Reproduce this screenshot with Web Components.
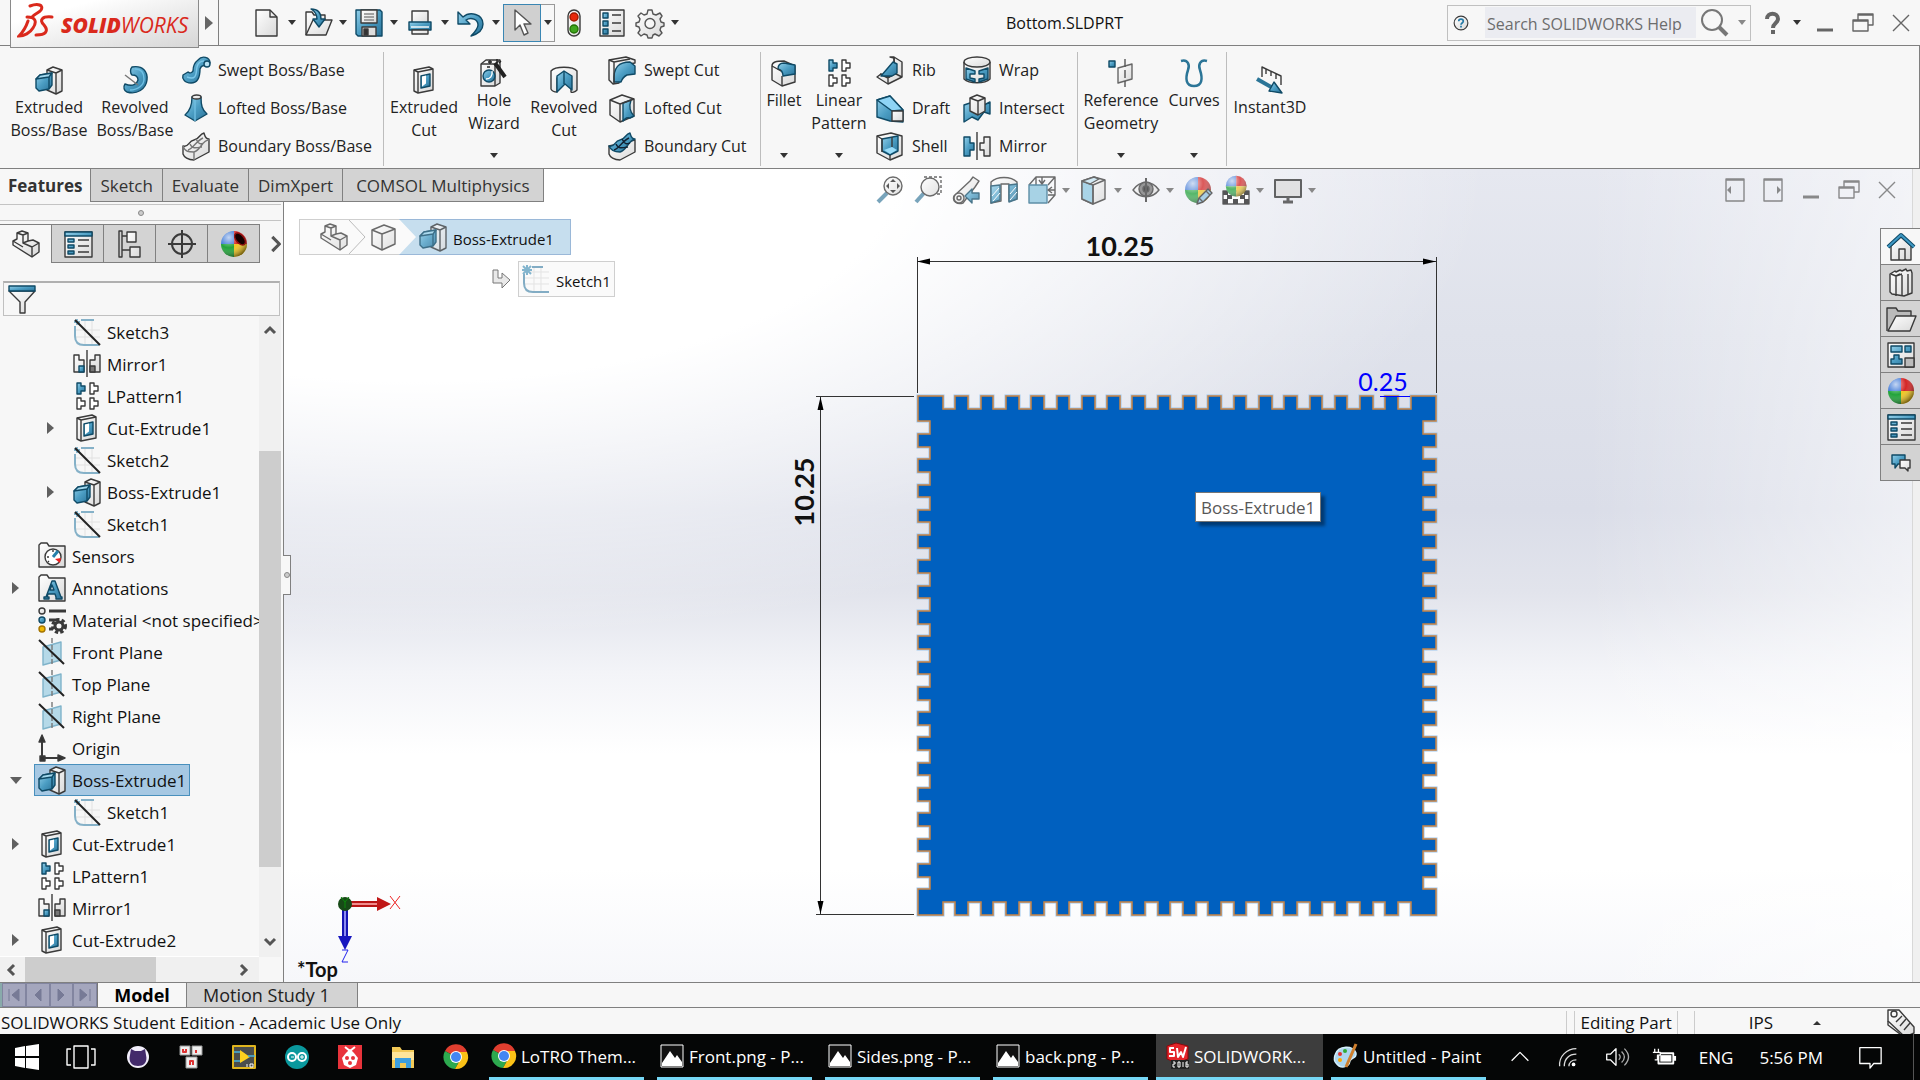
<!DOCTYPE html>
<html lang="en">
<head>
<meta charset="utf-8">
<title>Bottom.SLDPRT</title>
<style>
  html, body { margin: 0; height: 100%; overflow: hidden; }
  body { font: 17px/23px "Open Sans", "Noto Sans", sans-serif; color: #1a1a1a; background: #f7f7f7; }
</style>
</head>
<body>
<sw-app></sw-app>
<script>
const ICONS = {
  newdoc: '<path class="g" d="M3 1h14l7 7v19H3z"/><path d="M17 1v7h7"/>',
  open: '<path class="g" d="M2 26V3h6l2 3h11v5"/><path class="g" d="M2 26l7-15h19l-6 15z"/><path class="b" d="M7 0c7 0 10 4 10 10h4l-6 8-6-8h4c0-4-1-7-6-10z"/>',
  save: '<path class="b" d="M1 1h24l2 2v24H3l-2-2z"/><path class="g" d="M6 1h16v13H6z"/><path d="M9 5h10M9 8h10M9 11h10" stroke="#888"/><path d="M7 18h14v9H7z" fill="#ddd"/><path d="M9 20h4v6H9z" fill="#333"/>',
  print: '<path class="g" d="M6 2h16v13H6z"/><path class="b" d="M3 13h22v8H3z"/><path d="M5 18h18" stroke="#fff"/><path class="g" d="M6 21h16v4H6z"/>',
  undo: '<path class="b" d="M1 3v12h12l-4-4c5-3 12-1 12 5 0 4-3 7-7 11 7-2 12-6 12-12C26 5 13 2 6 8z"/>',
  select: '<path d="M7 1v20l5-5 4 10 4-2-4-9h7z" fill="#fff" stroke="#555"/>',
  traffic: '<rect class="g" x="8" y="1" width="12" height="26" rx="6"/><circle cx="14" cy="8" r="4" fill="#e8290b" stroke="#a31a00"/><circle cx="14" cy="20" r="4" fill="#3fa51d" stroke="#247306"/>',
  list: '<path class="g" d="M2 1h24v26H2z"/><path class="b" d="M5 4h5v5H5zM5 12h5v5H5zM5 20h5v5H5z"/><path d="M14 6h9M14 14h9M14 22h9"/>',
  gear: '<path class="g" stroke="#555" d="M12 1h4l1 4 3 1 4-2 2 3-2 3 1 3 3 1v3l-3 1-1 3 2 3-3 3-4-2-2 1-1 3h-4l-1-3-3-1-3 2-3-3 2-3-1-3-3-1v-3l3-1 1-3-2-3 3-3 3 2 3-1z"/><circle cx="14" cy="14.500" r="5" fill="#f7f7f7" stroke="#555"/>',
  boss: '<path class="g" d="M12 4l6-3 9 3v21l-6 3-9-4z"/><path d="M12 4l9 3v21M21 7l6-3"/><path class="b" d="M1 13l4-4 12-2v12l-3 4-10 2-3-3z"/><path fill="#a3d9ef" stroke="#0f4a66" d="M1 13l4-4 12-2-3 4z"/><path class="l" d="M14 11v12"/>',
  revolve: '<path class="b" d="M11 1c11-2 16 5 15 13-1 9-10 15-20 12-3-1-4-5-2-8 8 3 12 0 13-4 0-4-2-5-6-5-2-2-2-6 0-8z"/><path d="M14 3c6 0 9 4 9 10s-6 11-14 11" stroke="#6fc0e4"/><path d="M4 9l13 10" stroke="#777"/>',
  swept: '<path class="b" d="M16 4c4-5 12-3 12 3l-4 3c-3-1-5 0-6 3 0 10-3 14-9 14-7 0-9-5-8-8l5-3c2 1 3 2 5-1 0-5 1-8 5-11z"/><path d="M5 21c10 4 9-4 10-10 1-4 3-6 7-6" stroke="#7cc8ea"/><circle cx="25" cy="8" r="3" fill="#b8e2f4" stroke="#0f4a66"/>',
  loft: '<path class="b" d="M10 3c0 9-2 14-7 18l10 6 12-7c-5-4-6-9-6-17z"/><ellipse class="g" cx="14.500" cy="3" rx="4.500" ry="2"/><path d="M13 27V6" stroke="#70bfe2"/>',
  boundary: '<path class="g" d="M1 14c6 2 5-5 11-6s5-6 10-7c1 3 1 6 5 6v13l-15 8c-6 0-10-3-11-6z"/><path d="M1 14c2 6 6 6 11 6 7-2 8-12 15-12M12 20v8M8 12c2 5 6 4 12 3M14 7c3 6 5 5 8 4M6 18c5-1 8-9 15-12" stroke="#777"/>',
  boundarycut: '<path class="g" d="M1 14v8c1 3 5 6 11 6l15-8V8z"/><path class="b" d="M1 14c6 2 5-5 11-6s5-6 10-7c1 3 1 6 5 6-7 2-8 11-15 13-5 0-9-1-11-6z"/><path d="M8 12c2 5 6 4 12 3M14 7c3 6 5 5 8 4M6 18c5-1 8-9 15-12" stroke="#123"/>',
  cut: '<path class="g" d="M4 4l15-3 4 2v21L8 27l-4-2z"/><path d="M4 4l4 2 15-3M8 6v21"/><path class="b" d="M11 10l9-2v12l-9 2z"/><path d="M12 10.500l4-1v8l-4 3z" fill="#fff" stroke="none"/>',
  hole: '<path class="g" d="M1 5l5-4h14v23l-5 3H1z"/><path d="M1 5h14v22M15 5l5-4"/><circle class="b" cx="9" cy="17" r="6"/><path d="M6 20c4 0 7-3 6-8" stroke="#fff"/><path d="M15 4l10 14" stroke="#222" stroke-width="4"/><path d="M8 3h4M10 1v4M17 0v4M21 2l-2 2M7 8h3" stroke="#222"/>',
  revcut: '<path class="g" d="M1 5c4-5 22-5 26 0v19c-2 2-5 3-6 2V12l-7-6-7 6v14c-3 0-5-1-6-3z"/><path class="b" d="M7 10l7-5 8 5v14l-7-6-8 8z"/><path class="l" d="M14 5v13"/>',
  sweptcut: '<path class="g" d="M1 4l17-3 9 3v3l-7 1c-8 4-8 10-9 19l-6 1-4-4z"/><path class="b" d="M6 26c-1-15 5-20 16-20l5 4v8l-8 1c-4 2-5 4-6 7z"/><path d="M1 4l5 2v22M6 6l16-3"/>',
  loftcut: '<path class="g" d="M2 6l12-5 12 4v17l-14 6L2 21z"/><path d="M2 6l10 4v18"/><path class="b" d="M15 9l8-3c-2 6-2 11 3 16l-4 2c-3-1-4 0-7 3z"/><path d="M12 10l14-5"/>',
  fillet: '<path class="g" d="M2 7c0-4 4-5 12-5l11 5v16L12 27 2 21z"/><path class="b" d="M8 10c0-5 3-6 6-6l11 2v9l-12 2c0-4-1-6-5-7z"/><path d="M12 17v10M2 7l9 5"/>',
  pattern: '<path class="b" d="M4 1h4v3h4v5H8v3H4z"/><path d="M17 1h4v3h4v5h-4v3h-4zM4 16h4v3h4v5H8v3H4zM17 16h4v3h4v5h-4v3h-4z" fill="#fff"/>',
  rib: '<path class="g" d="M14 1h4l8 5v15l-14 7-11-7 4-3 8 3 6-3-1-16z"/><path d="M18 2v16l-6 4-8-4M12 22v6M18 17l8 4"/><path class="b" d="M17 6l4 2v9l-5 3H5z"/>',
  draft: '<path class="b" d="M1 6l13-4 13 14v12l-13-1L1 23z"/><path fill="#8ed4f5" stroke="#0f4a66" d="M1 6l13-4 13 14-11 1z"/><path class="g" d="M16 17h11v10H16z"/>',
  shell: '<path class="g" d="M1 4l14-3 11 3v19l-12 5L1 21z"/><path class="b" d="M6 7l16-3v15l-8 4-8-4z"/><path fill="#9adcf8" stroke="none" d="M8 18l8-3 5 3-7 4z"/><path d="M1 4l5 3v13M14 28v-5M16 5v10"/>',
  wrap: '<path class="g" d="M1 6v17c5 5 21 5 26 0V6"/><ellipse class="g" cx="14" cy="6" rx="13" ry="5"/><path class="b" d="M3 12l9 3v3H7v4l5 1v3l-9-3zM25 12l-9 3v3h5v4l-5 1v3l9-3z"/>',
  intersect: '<path class="b" d="M1 11l9-3 7 5 10-5v12l-6-2-6 8-6-3-8 5z"/><path class="g" d="M7 4l7-3 8 3v13l-7 4-8-4z"/><path d="M7 4l8 3v14M15 7l7-3"/>',
  mirror: '<path class="b" d="M1 5h6v6h4v7H7v6H1z"/><path class="g" d="M27 5h-6v6h-4v7h4v6h6z"/><path d="M14 0v28"/>',
  refgeo: '<path class="b" d="M2 2h6v6H2z"/><path class="g" stroke="#666" d="M11 9l14-4v15l-14 4z"/><path d="M18 0v28" stroke-dasharray="8 3" stroke="#555"/>',
  curves: '<path d="M1 2c7-2 9 4 7 9-3 9-2 16 6 16s9-7 6-16c-2-5 0-11 7-9" stroke="#2b7597" stroke-width="2.500"/>',
  instant: '<path d="M6 11V1l19 9v9M10 3v5M15 5v5M20 8v5"/><path d="M1 13l16 9" stroke="#2b7597" stroke-width="4"/><path class="b" d="M18 16l8 11-13-2z"/>',
  zoomfit: '<path d="M2 26l9-9" stroke="#4c86a5" stroke-width="4"/><circle class="g" cx="17" cy="10" r="9"/><path fill="#222" stroke="none" d="M17 3l3 3h-6zM17 17l3-3h-6zM10 10l3-3v6zM24 10l-3-3v6z"/>',
  zoomarea: '<path d="M2 26l8-9" stroke="#4c86a5" stroke-width="4"/><path d="M10 1h17v17h-5" stroke-dasharray="3 2"/><circle class="g" cx="16" cy="11" r="9"/>',
  prev: '<path class="g" d="M2 20L18 5l3-4 6 4-4 6-12 16c-6 2-11-2-9-7z"/><circle class="g" cx="7" cy="22" r="5"/><circle cx="7" cy="22" r="2"/><path class="b" d="M13 20l7-7v4h7v6h-7v4z"/>',
  section: '<path class="g" d="M1 6c6-6 20-6 26 0v17l-8 2V8h-8v17l-10 2z"/><path class="b" d="M1 10l9-1v15l-9 3zM19 9l8-1v15l-8 3z"/><path d="M2 20l7-8M3 25l7-8M20 18l6-7M20 24l7-8" stroke="#fff" stroke-width="1"/>',
  orient: '<path d="M1 9l7-8h19v18l-7 8M8 1v8M20 9l7-8M27 19h-7"/><path fill="#8cc5de" stroke="#2b6c8c" d="M1 9h18v18H1z"/><path d="M14 1v6M11 4l3 4 3-4M27 14h-6M24 11l-4 3 4 3"/>',
  display: '<path class="g" d="M2 5l12-4 11 3v19l-12 5-11-5z"/><path fill="#8fc9e2" d="M2 5l11 4v19L2 23z"/><path fill="#c6e5f2" d="M2 5l12-4 5 2-9 5z"/><path d="M13 9l12-5M13 9v19"/>',
  eye: '<path class="g" d="M1 14c7-10 19-10 26 0-7 9-19 9-26 0z"/><circle cx="14" cy="13" r="7" fill="#777"/><circle cx="14" cy="13" r="3" fill="#222"/><path d="M14 2v24" stroke-width="2"/>',
  monitor: '<path d="M1 4h26v17H1z" fill="#ddd" stroke="#333" stroke-width="2"/><path d="M14 21v5M9 26h10" stroke-width="3"/>',
  part: '<path class="g" d="M1 11l4-2V3l5-2 6 2v8l5-1 6 3v9l-7 5L1 15z"/><path d="M5 3l6 2 5-2M11 5v8l9 4v10M20 17l7-4M11 13l5-2M1 11l10 6"/>',
  cube: '<path class="g" d="M2 7l12-5 11 4v15l-13 6-10-5z"/><path d="M2 7l10 4v16M12 11l13-5"/>',
  props: '<path class="g" d="M1 2h27v25H1z"/><path class="b" d="M1 2h27v4H1zM4 9h6v3H4zM4 15h6v3H4zM4 21h6v3H4z"/><path d="M14 10h11M14 16h11M14 22h11"/>',
  config: '<path d="M3 1h3v26H3zM6 6h5M6 20h8"/><path class="g" d="M11 2h9v10h-9zM14 17h10v10H14z"/>',
  target: '<circle cx="14" cy="14" r="10" stroke-width="2"/><path d="M0 14h28M14 0v28" stroke-width="2"/>',
  filter: '<path class="g" d="M1 6h26L17 17v11h-5V17z"/><path class="b" d="M1 1h26v5H1z"/>',
  sketch: '<path d="M1 12h26M1 19h26M12 1v26M19 1v26" stroke="#e1e1e1" stroke-width="1"/><path d="M8 2h13M2 8v10c0 6 3 9 9 9h15" stroke="#85b1c8" stroke-width="2"/><path d="M1 4h6M4 1v6M2 2l5 5" stroke="#5a9dbf"/><path d="M2 2l25 25" stroke="#222" stroke-width="2"/>',
  sketchplain: '<path d="M1 7h26M1 13h26M1 19h26M12 1v26M19 1v26" stroke="#ddd" stroke-width="1"/><path d="M10 2h11M2 9v9c0 6 3 9 9 9h16" stroke="#5a93b2" stroke-width="2"/><path d="M0 5h10M5 0v10M1 1l8 8M1 9l8-8" stroke="#5a9dbf" stroke-width="2"/>',
  mirrorf: '<path class="g" d="M1 5h5v5h5v12H1zM27 5h-5v5h-5v12h10z"/><path class="b" d="M6 16h5v6H6z"/><path d="M17 16h5v6h-5z" fill="#777"/><path d="M14 0v27"/>',
  sensor: '<path class="g" d="M1 25V3l2-2h6l2 3h16v21z"/><circle cx="15" cy="15" r="8" fill="#fff"/><path d="M15 15l5-6" stroke="#2680ab" stroke-width="3"/><path fill="#e22" stroke="none" d="M17 17l6-1-1 5z"/><path d="M9 15h2M15 8v2M10 20l1-1"/>',
  note: '<path class="g" d="M1 27V3l2-2h6l2 3h16v23z"/><path class="b" d="M6 25v-2h2l6-16h3l6 16h1v2h-6v-2l-1-3h-7l-1 3h2v2zM12 16h4l-2-5z"/>',
  material: '<g stroke-width="3"><path d="M11 5h17M11 14h10M11 23h4"/></g><circle class="g" cx="4" cy="5" r="3"/><circle class="b" cx="4" cy="14" r="3"/><circle cx="4" cy="23" r="3" fill="#f0b800" stroke="#a67500"/><circle cx="21" cy="20" r="6" stroke-width="4" stroke-dasharray="3 2"/><circle cx="21" cy="20" r="4" stroke-width="3"/>',
  plane: '<path d="M5 9l18-5v18L5 27z" fill="#b5d9e8" stroke="#7fb3ca"/><path d="M14 0v28" stroke="#777" stroke-dasharray="5 2"/><path d="M1 2l25 24" stroke="#222" stroke-width="2"/>',
  origin: '<path d="M4 6v18h18" stroke-width="2"/><path fill="#333" d="M1 8l3-7 3 7zM20 21l7 3-7 3zM2 22h5v5H2z"/>',
  home: '<path class="g" d="M4 13L14 4l10 9v14H4z"/><path d="M12 27V16h6v11"/><path d="M1 14L14 2l13 12" stroke="#0f4a66" stroke-width="4"/><path d="M1 14L14 2l13 12" stroke="#3e98c4" stroke-width="2"/>',
  books: '<path class="g" d="M3 5l5-3 1 1 4-2 2 1 4-2 1 2 4-1 1 3v20l-8 3-12-2-2-2z"/><path d="M9 7v20M15 6v21M21 5v20M4 5l5 2 4-2M9 7l6-2"/>',
  folder: '<path d="M0 26V3h9l2 3h13v5" fill="#bbb"/><path class="g" d="M1 26L9 11h20l-6 15z"/>',
  palette: '<path class="g" d="M1 2h26v24H1z"/><path class="b" d="M4 5h11v6H4zM18 5h6v6h-6zM4 23v-5h3v-4h5v4h3v5z"/><path fill="#bbb" d="M18 17h9v9h-9z"/>',
  chat: '<path class="b" d="M5 6h13v9h-7l-3 4v-4H5z"/><path class="g" d="M13 11h10v8h-2v3l-3-3h-5z"/>',
  helpball: '<circle class="g" cx="14" cy="14" r="12" stroke-width="2"/><path d="M10 11c0-5 8-5 8 0 0 3-4 3-4 6M14 19v3" stroke="#2579a5" stroke-width="3"/>',
  magnify: '<circle cx="11" cy="11" r="10" stroke="#777" stroke-width="2"/><path d="M18 18l8 8" stroke="#777" stroke-width="4"/>',
  help: '<path d="M9 10c0-7 11-7 11 0 0 4-5 4-5 9M15 21v4" stroke="#666" stroke-width="4"/>',
  min: '<path d="M6 21h16" stroke="#666" stroke-width="3"/>',
  restore: '<path d="M9 11V5h15v11h-5M4 11h15v11H4zM9 6h15M4 12h15" stroke="#666"/>',
  close: '<path d="M6 6l16 16M22 6L6 22" stroke="#666"/>',
  dockl: '<path d="M5 3h18v22H5zM5 4h18" stroke="#666"/><path fill="#666" stroke="none" d="M6 14l4-4v8z"/>',
  dockr: '<path d="M5 3h18v22H5zM5 4h18" stroke="#666"/><path fill="#666" stroke="none" d="M22 14l-4-4v8z"/>',
  tag: '<path class="g" d="M1 1h11l15 17v6l-9 4L1 12z"/><circle cx="7" cy="5" r="3"/><path d="M9 13l6-6M13 17l6-7M17 21l6-7M1 12v4l16 12"/>',
  win: '<path fill="#fff" stroke="none" d="M2 5l10-2v10H2zM13 3l13-2v12H13zM2 15h10v10L2 23zM13 15h13v12l-13-2z"/>',
  taskview: '<path d="M7 3h14v22H7zM4 6H0v16h4M24 6h4v16h-4" stroke="#fff"/>',
  github: '<circle cx="14" cy="14" r="11" fill="#f2eefa" stroke="none"/><path fill="#432a6b" stroke="none" d="M7 6l4 2h6l4-2 1 6c2 8-3 11-8 11S4 20 6 12z"/>',
  cards: '<g fill="#eee" stroke="#999" stroke-width="1"><path d="M3 3h10v9H3zM15 3h10v9H15zM9 14h11v11H9z"/></g><path d="M6 6v3h3V6M19 7v3M13 22v-4h3v4" stroke="#d33" stroke-width="2"/>',
  labview: '<path fill="#4a4d4c" stroke="#e0b51e" stroke-width="2" d="M3 3h22v22H3z"/><path fill="#ffd21e" stroke="none" d="M10 7l10 7-10 6z"/><path d="M4 9h6M4 18h6M18 13h7" stroke="#48b4dd"/><path d="M17 21v3M20 21v3h3v-3z" stroke="#fff" stroke-width="1"/>',
  arduino: '<circle cx="14" cy="14" r="12" fill="#0a989d" stroke="none"/><g stroke="#fff" stroke-width="2"><circle cx="9" cy="14" r="4"/><circle cx="19" cy="14" r="4"/><path d="M8 14h3M17 14h4M19 12v4" stroke-width="1"/></g>',
  berry: '<path fill="#e8333b" stroke="none" d="M2 2h24v24H2z"/><path fill="#fff" stroke="none" d="M14 6l4 4 4 5-2 7-6 3-6-3-2-7 4-5z"/><path d="M9 4l5 4 5-4" stroke="#fff" stroke-width="2"/><g fill="#e8333b" stroke="none"><circle cx="11" cy="15" r="2"/><circle cx="17" cy="15" r="2"/><circle cx="14" cy="20" r="2"/></g>',
  explorer: '<path fill="#f3c956" stroke="none" d="M3 4h8l2 3h12v18H3z"/><path fill="#ffe59a" stroke="none" d="M3 9h22v8H3z"/><path fill="#3d9fe0" stroke="none" d="M6 25V15h16v10h-5v-5h-6v5z"/>',
  chrome: '<g stroke="none"><path fill="#e03e2f" d="M14 14L3 8A12 12 0 0 1 25 9H14z"/><path fill="#2da94f" d="M14 14L3 8a12 12 0 0 0 10 18l5-9z"/><path fill="#fbc116" d="M14 9h11a12 12 0 0 1-12 17l5-9z"/><circle cx="14" cy="14" r="6" fill="#fff"/><circle cx="14" cy="14" r="5" fill="#4286f3"/></g>',
  photo: '<path fill="#111" stroke="#fff" stroke-width="1" d="M3 3h22v22H3z"/><path fill="#fff" stroke="none" d="M4 21l8-12 5 7 2-3 5 7v4H4z"/>',
  sw: '<path fill="#e4252a" stroke="#89090c" stroke-width="1" d="M4 4l9-3 12 3v13l-11 4-10-4z"/><path d="M11 6H7v4h4v4H6M14 6l1 9 3-5 2 5 3-10" stroke="#fff" stroke-width="2"/><path fill="#222" stroke="none" d="M8 18h18v9H8z"/><path d="M10 20h2v2h-2v3h2M15 20h2v5h-2zM20 20v5M25 20h-2v5h2v-3h-2" stroke="#fff" stroke-width="1"/>',
  paint: '<path fill="#acd5ee" stroke="#d5effb" d="M3 13C6 3 22 3 24 11c1 6-5 4-6 8-1 7-10 8-14 2-2-2-2-5-1-8z"/><path d="M24 2L14 25" stroke="#cf7f2e" stroke-width="3"/><g stroke="none"><circle cx="8" cy="12" r="2" fill="#d33"/><circle cx="13" cy="9" r="2" fill="#3a3"/><circle cx="8" cy="18" r="2" fill="#fa0"/></g>',
  up: '<path d="M5 18l9-9 9 9" stroke="#fff"/>',
  wifi: '<g stroke="#ddd"><path d="M5 24C4 13 13 5 23 5M10 24c0-8 5-13 13-13M15 24c0-4 3-7 8-7"/></g><circle cx="20" cy="22" r="2" fill="#fff" stroke="none"/>',
  sound: '<g stroke="#fff"><path d="M4 11h4l6-6v18l-6-6H4z"/><path d="M17 11c2 2 2 4 0 6M20 8c4 4 4 8 0 12M23 5c6 6 6 12 0 18" stroke="#aaa"/></g>',
  battery: '<path d="M8 10h16v11H8zM26 13v5" stroke="#fff" stroke-width="2"/><path d="M10 12h12v7H10z" fill="#fff" stroke="none"/><path d="M4 5v4M8 5v4M2 9h8v3H7v5H4" stroke="#fff" fill="#111"/>',
  action: '<path d="M3 4h23v17h-8l-4 5v-5H3z" stroke="#fff"/>',
  chevr: '<path d="M8 5l9 9-9 9" stroke="#555" stroke-width="4"/>'
};
const BALL = '<g stroke="none"><path fill="#3975d6" d="M14 14H1A13 13 0 0 1 14 1z"/><path fill="#d42525" d="M14 14V1a13 13 0 0 1 13 13z"/><path fill="#22a33a" d="M14 14v13A13 13 0 0 1 1 14z"/><path fill="#f0c522" d="M14 14h13a13 13 0 0 1-13 13z"/><circle cx="14" cy="14" r="13" fill="url(#s)"/></g>';
ICONS.ball = BALL;
ICONS.display2 = BALL + '<ellipse cx="20" cy="9" rx="4" ry="7" transform="rotate(-40 20 9)" fill="#150000" stroke="#8b1010"/>';
ICONS.appearance = BALL + '<path d="M13 28l2-6 9-9 4 4-9 9z" fill="#8fc3de" stroke="#333"/><path d="M15 22l4 4M22 15l4 4"/>';
ICONS.scene = '<path fill="#fff" stroke="#333" d="M1 15h26v13H1z"/><path fill="#222" stroke="none" d="M1 15h5v4H1zM22 15h5v4h-5zM5 19h5v4H5zM18 19h5v4h-5zM1 23h5v5H1zM11 23h5v5h-5zM22 23h5v5h-5z"/><g transform="translate(3 -1) scale(.8)">' + BALL + '</g>';
const DEFS = '<defs><linearGradient id="b" x1="0" y1="0" x2="1" y2="1"><stop offset="0" stop-color="#94d0ea"/><stop offset=".5" stop-color="#4b9dc3"/><stop offset="1" stop-color="#2a7197"/></linearGradient><linearGradient id="g" x1="0" y1="0" x2="1" y2="1"><stop offset="0" stop-color="#fff"/><stop offset="1" stop-color="#d9d9d9"/></linearGradient><radialGradient id="s" cx=".3" cy=".25" r=".8"><stop offset="0" stop-color="#fff" stop-opacity=".7"/><stop offset=".5" stop-color="#fff" stop-opacity="0"/><stop offset="1" stop-color="#000" stop-opacity=".5"/></radialGradient></defs>';

function define(name, markup, setup) {
  const template = document.createElement('template');
  customElements.define(name, class extends HTMLElement {
    constructor() { super(); this.attachShadow({ mode: 'open' }); }
    connectedCallback() {
      if (this.shadowRoot.childNodes.length) return;
      template.innerHTML = typeof markup === 'function' ? markup(this) : markup;
      this.shadowRoot.append(template.content.cloneNode(true));
      if (setup) setup(this, this.shadowRoot);
    }
  });
}
const BUTTON = 'button{font:inherit;color:inherit;background:none;border:0;padding:0;margin:0}';

define('sw-icon', el => `<style>:host{display:block;flex:none;width:var(--size,28px);height:var(--size,28px)}
svg{display:block;width:100%;height:100%;overflow:visible;fill:none;stroke:#3a3a3a;stroke-width:1.4;stroke-linejoin:round}
.b{fill:url(#b);stroke:#0f4a66}.g{fill:url(#g)}.l{stroke:#0f4a66}</style>
<svg viewBox="0 0 28 28" aria-hidden="true">${DEFS}${ICONS[el.getAttribute('name')] || ''}</svg>`);

define('sw-caret', '<style>:host{display:block;flex:none;width:0;height:0;border:4px solid transparent;border-top:5px solid #333;border-bottom:0}:host([dim]){border-top-color:#888}</style>');

/* Icon button for the title bar and the view toolbar, with an optional menu arrow. */
define('sw-tool', el => `<style>:host{display:block;flex:none}${BUTTON}button{display:flex;align-items:center;gap:7px}
:host([dim]) button{gap:6px}:host([dim]) sw-icon{opacity:.75}
:host([active]) button{gap:0}:host([active]) sw-icon{padding:4px;background:#d0d0d0;border:1px solid #3a86b3}
:host([active]) .c{display:flex;align-items:center;justify-content:center;width:13px;height:36px;border:1px solid #999;border-left:0}</style>
<button aria-label="${el.getAttribute('icon')}"><sw-icon name="${el.getAttribute('icon')}"></sw-icon>${el.hasAttribute('drop') ? `<span class="c"><sw-caret ${el.hasAttribute('dim') ? 'dim' : ''}></sw-caret></span>` : ''}</button>`);

define('sw-logo', `<style>:host{display:flex;align-items:center;box-sizing:border-box;width:189px;height:50px;gap:6px;padding:6px 0 0 6px;border:1px solid #8a8a8a;border-top:0;background:linear-gradient(165deg,#fff 25%,#d6d6d6);color:#da291c;font:italic 21px/26px "Open Sans",sans-serif;position:relative;z-index:2}
svg{flex:none;width:38px;height:36px;margin-top:-8px}b{font-weight:800}</style>
<svg viewBox="0 0 38 36" fill="none" stroke="#da291c" stroke-width="3" stroke-linecap="round"><path d="M13 3c8-3 14-1 11 4-2 3-7 4-9 7"/><path d="M10 14c9 0 10 5 6 11-3 5-9 8-14 8 4-4 7-9 9-15"/><path d="M35 14c-10-1-13 3-8 8 5 6 2 10-8 10"/></svg>
<span><b>SOLID</b>WORKS</span>`);

define('sw-titlebar', `<style>:host{display:flex;flex:none;align-items:center;box-sizing:border-box;height:46px;border-bottom:1px solid #808080;background:#f7f7f7}
${BUTTON}
.left{display:flex;align-items:center;flex:1006 0 0}sw-logo{align-self:flex-start;margin-left:10px;flex:none}
.more{display:flex;align-items:center;width:20px;height:45px;padding-left:6px;box-sizing:border-box;border-right:1px solid #808080}
.more i{border:7px solid transparent;border-left:8px solid #666;border-right:0}
.files{display:flex;gap:8px;margin:0 3px 0 34px}.opts{display:flex;gap:10px;margin-left:5px}
h1{margin:0;font:16px/23px "Open Sans",sans-serif;color:#111;padding-top:2px}
.right{display:flex;align-items:center;justify-content:flex-end;flex:797 0 0}
.search{display:flex;align-items:center;box-sizing:border-box;width:304px;height:36px;border:1px solid #c0c0c0;padding:0 4px 0 5px;margin:0}
.search sw-icon{--size:16px}.search .go{--size:28px;margin:0 9px 0 5px}
input{flex:1;min-width:0;height:31px;box-sizing:border-box;border:0;padding:2px 2px 0;margin-left:16px;background:#ebecf1;font:16px/22px "Open Sans",sans-serif;color:#666}
input::placeholder{color:#6d6d6d;opacity:1}
.ctl{display:flex;align-items:center;margin:0 5px 0 7px;gap:10px}</style>
<div class="left"><sw-logo></sw-logo><button class="more" aria-label="Show menu"><i></i></button>
<div class="files"><sw-tool icon="newdoc" drop></sw-tool><sw-tool icon="open" drop></sw-tool><sw-tool icon="save" drop></sw-tool><sw-tool icon="print" drop></sw-tool><sw-tool icon="undo" drop></sw-tool></div>
<sw-tool icon="select" drop active></sw-tool>
<div class="opts"><sw-tool icon="traffic"></sw-tool><sw-tool icon="list"></sw-tool><sw-tool icon="gear" drop></sw-tool></div></div>
<h1>Bottom.SLDPRT</h1>
<div class="right"><form class="search"><sw-icon name="helpball"></sw-icon><input type="text" aria-label="Search help" placeholder="Search SOLIDWORKS Help"><sw-icon class="go" name="magnify"></sw-icon><sw-caret dim></sw-caret></form>
<div class="ctl"><sw-tool icon="help" drop></sw-tool><sw-tool icon="min"></sw-tool><sw-tool icon="restore"></sw-tool><sw-tool icon="close"></sw-tool></div></div>`);

/* Tall ribbon command: icon over a label of one or two lines. */
define('sw-command', el => `<style>:host{display:block;flex:none;width:var(--w,86px);height:100%}${BUTTON}
button{position:relative;display:flex;flex-direction:column;align-items:center;width:100%;height:100%;padding-top:20px;color:#222}
:host([drop]) button{padding-top:13px}span{display:block;margin-top:2px;text-align:center;line-height:23px;white-space:nowrap}sw-caret{position:absolute;bottom:10px}</style>
<button><sw-icon name="${el.getAttribute('icon')}"></sw-icon><span><slot></slot></span>${el.hasAttribute('drop') ? '<sw-caret></sw-caret>' : ''}</button>`);

define('sw-row-command', el => `<style>:host{display:block;height:38px}${BUTTON}button{display:flex;align-items:center;gap:8px;height:100%;white-space:nowrap;color:#222}</style>
<button><sw-icon name="${el.getAttribute('icon')}"></sw-icon><span><slot></slot></span></button>`);

define('sw-group', '<style>:host{display:flex;flex:none;box-sizing:border-box;width:var(--group);height:122px;position:relative}:host([divided])::after{content:"";position:absolute;right:0;top:6px;bottom:2px;width:1px;background:#bdbdbd}::slotted(div){padding-top:5px;flex:none;box-sizing:border-box}</style><slot></slot>');

define('sw-ribbon', `<style>:host{display:flex;flex:none;box-sizing:border-box;height:123px;background:#f7f7f7;border-bottom:1px solid #808080;border-right:1px solid #808080;font-size:16px}</style>
<sw-group divided style="--group:384px;padding-left:6px"><sw-command icon="boss">Extruded<br>Boss/Base</sw-command><sw-command icon="revolve">Revolved<br>Boss/Base</sw-command>
<div style="padding-left:4px"><sw-row-command icon="swept">Swept Boss/Base</sw-row-command><sw-row-command icon="loft">Lofted Boss/Base</sw-row-command><sw-row-command icon="boundary">Boundary Boss/Base</sw-row-command></div></sw-group>
<sw-group divided style="--group:377px;padding-left:5px"><sw-command style="--w:70px" icon="cut">Extruded<br>Cut</sw-command><sw-command style="--w:70px" icon="hole" drop>Hole<br>Wizard</sw-command><sw-command style="--w:70px" icon="revcut">Revolved<br>Cut</sw-command>
<div style="padding-left:9px"><sw-row-command icon="sweptcut">Swept Cut</sw-row-command><sw-row-command icon="loftcut">Lofted Cut</sw-row-command><sw-row-command icon="boundarycut">Boundary Cut</sw-row-command></div></sw-group>
<sw-group divided style="--group:317px"><sw-command style="--w:46px" icon="fillet" drop>Fillet</sw-command><sw-command style="--w:64px" icon="pattern" drop>Linear<br>Pattern</sw-command>
<div style="padding-left:5px;width:92px"><sw-row-command icon="rib">Rib</sw-row-command><sw-row-command icon="draft">Draft</sw-row-command><sw-row-command icon="shell">Shell</sw-row-command></div>
<div><sw-row-command icon="wrap">Wrap</sw-row-command><sw-row-command icon="intersect">Intersect</sw-row-command><sw-row-command icon="mirror">Mirror</sw-row-command></div></sw-group>
<sw-group divided style="--group:149px"><sw-command icon="refgeo" drop>Reference<br>Geometry</sw-command><sw-command style="--w:60px" icon="curves" drop>Curves</sw-command></sw-group>
<sw-group style="--group:90px"><sw-command icon="instant">Instant3D</sw-command></sw-group>`);

define('sw-ribbon-tabs', `<style>:host{display:flex;width:max-content;height:33px;position:relative;z-index:2;background:#f7f7f7}${BUTTON}
button{height:33px;box-sizing:border-box;padding:0 9px;background:#d3d3d3;border-right:1px solid #808080;border-bottom:1px solid #808080;color:#333;white-space:nowrap}
button[aria-selected=true]{background:#f7f7f7;border-bottom:0;font-weight:700;padding:0 8px}button:last-child{padding:0 13px}</style>
<button role="tab" aria-selected="true">Features</button><button role="tab">Sketch</button><button role="tab">Evaluate</button><button role="tab">DimXpert</button><button role="tab">COMSOL Multiphysics</button>`);

define('sw-node', el => `<style>:host{display:flex;align-items:center;height:32px;padding-left:calc(var(--level,0)*35px)}${BUTTON}
.x{flex:none;width:34px;display:flex;padding-left:12px;box-sizing:border-box}
.x i{border:6px solid transparent;border-left:7px solid #606060;border-right:0}.x i.down{border:6px solid transparent;border-top:7px solid #606060;border-bottom:0;margin-left:-2px}
.n{display:flex;align-items:center;gap:6px;box-sizing:border-box;height:32px;padding:0 3px;border:1px solid transparent;white-space:nowrap;color:#111}
:host([selected]) .n{background:#a6c8e3;border-color:#4990bd}</style>
<span class="x">${el.hasAttribute('expand') ? `<i class="${el.getAttribute('expand')}"></i>` : ''}</span><button class="n"><sw-icon name="${el.getAttribute('icon')}"></sw-icon><span><slot></slot></span></button>`,
  el => el.style.setProperty('--level', el.getAttribute('level') || 0));

define('sw-scroll', `<style>:host{display:flex;align-items:center;justify-content:space-between;background:#f0f0f0;position:relative;flex:none}
:host([axis=y]){flex-direction:column;width:22px;padding:5px 0 6px;box-sizing:border-box}:host([axis=x]){height:25px;padding:0 6px 0 2px;box-sizing:border-box}
i{position:absolute;background:#cdcdcd}:host([axis=y]) i{left:0;right:0;top:21%;height:65%}:host([axis=x]) i{top:0;bottom:0;left:25px;width:131px}
svg{width:18px;height:18px;fill:none;stroke:#555;stroke-width:3}:host([axis=x]) svg{transform:rotate(-90deg)}</style>
<svg viewBox="0 0 18 18"><path d="M4 12l5-5 5 5"/></svg><i></i><svg viewBox="0 0 18 18"><path d="M4 6l5 5 5-5"/></svg>`);

define('sw-panel', `<style>:host{display:flex;flex-direction:column;flex:none;width:284px;box-sizing:border-box;border-right:1px solid #808080;background:#f7f7f7;position:relative;min-height:0}${BUTTON}
.grip{flex:none;box-sizing:border-box;width:281px;height:17px;margin-top:2px;border:1px solid #c4c4c4;border-width:1px 0;display:flex;align-items:center;justify-content:center}
.dot{width:4px;height:4px;border:1px solid #888;border-radius:50%;background:#ccc}
.tabs{display:flex;flex:none;height:39px;width:281px;margin-top:3px}
.tabs button{display:flex;align-items:center;justify-content:center;width:52px;border:1px solid #808080;border-left:0;background:#d3d3d3;box-sizing:border-box}
.tabs button.on{background:none;border-bottom:0}.tabs button.more{width:21px;border:0;background:none;overflow:hidden}.more sw-icon{--size:22px;margin-left:12px}
.filter{flex:none;display:flex;align-items:center;box-sizing:border-box;width:277px;height:35px;margin:18px 0 0 3px;border:1px solid #c0c0c0;border-top:2px solid #b0b0b0;padding-left:4px;gap:6px}
.filter input{flex:1;min-width:0;border:0;background:none;font:inherit;outline:0}
.body{flex:1;display:flex;min-height:0;width:281px}.tree{flex:1;min-width:0;overflow:hidden;border-bottom:1px solid #fff}
sw-scroll[axis=x]{width:259px}
.handle{position:absolute;left:283px;top:386px;width:8px;height:40px;box-sizing:border-box;border:1px solid #808080;border-left:0;background:#f7f7f7;display:flex;align-items:center;justify-content:center;z-index:3}</style>
<sw-ribbon-tabs></sw-ribbon-tabs><div class="grip"><span class="dot"></span></div>
<div class="tabs"><button class="on" aria-label="Feature tree"><sw-icon name="part"></sw-icon></button><button aria-label="Properties"><sw-icon name="props"></sw-icon></button><button aria-label="Configurations"><sw-icon name="config"></sw-icon></button><button aria-label="Dimensions"><sw-icon name="target"></sw-icon></button><button aria-label="Display"><sw-icon name="display2"></sw-icon></button><button class="more" aria-label="More"><sw-icon name="chevr"></sw-icon></button></div>
<label class="filter"><sw-icon name="filter"></sw-icon><input type="text" aria-label="Filter"></label>
<div class="body"><div class="tree">
<sw-node level="1" icon="sketch">Sketch3</sw-node><sw-node level="1" icon="mirrorf">Mirror1</sw-node><sw-node level="1" icon="pattern">LPattern1</sw-node><sw-node level="1" icon="cut" expand="right">Cut-Extrude1</sw-node><sw-node level="1" icon="sketch">Sketch2</sw-node><sw-node level="1" icon="boss" expand="right">Boss-Extrude1</sw-node><sw-node level="1" icon="sketch">Sketch1</sw-node>
<sw-node icon="sensor">Sensors</sw-node><sw-node icon="note" expand="right">Annotations</sw-node><sw-node icon="material">Material &lt;not specified&gt;</sw-node><sw-node icon="plane">Front Plane</sw-node><sw-node icon="plane">Top Plane</sw-node><sw-node icon="plane">Right Plane</sw-node><sw-node icon="origin">Origin</sw-node>
<sw-node icon="boss" expand="down" selected>Boss-Extrude1</sw-node><sw-node level="1" icon="sketch">Sketch1</sw-node><sw-node icon="cut" expand="right">Cut-Extrude1</sw-node><sw-node icon="pattern">LPattern1</sw-node><sw-node icon="mirrorf">Mirror1</sw-node><sw-node icon="cut" expand="right">Cut-Extrude2</sw-node>
</div><sw-scroll axis="y"></sw-scroll></div><sw-scroll axis="x"></sw-scroll><div class="handle"><span class="dot"></span></div>`);

define('sw-breadcrumb', `<style>:host{display:block;width:max-content;font-size:15px;color:#111}
.bar{display:flex;align-items:center;box-sizing:border-box;height:36px;width:272px;border:1px solid #cfcfcf;background:#fafafa}
sw-icon{opacity:.75}.bar>sw-icon:first-child{margin-left:20px}.sep{width:18px;height:34px;flex:none;fill:none;stroke:#bbb;margin:0 3px 0 1px}
.cur{display:flex;align-items:center;gap:6px;flex:1;height:36px;margin:-1px -1px -1px 1px;white-space:nowrap;padding-left:20px;background:#c6deee;clip-path:polygon(0 0,100% 0,100% 100%,0 100%,17px 50%);box-shadow:inset 0 0 0 1px #9ab8d8}
.cur span,.chip span{padding-top:4px}
.sub{display:flex;align-items:center;gap:7px;margin:6px 0 0 193px}
.chip{display:flex;align-items:center;gap:6px;box-sizing:border-box;height:36px;padding:0 3px;border:1px solid #cfcfcf;background:#fafafa}</style>
<div class="bar"><sw-icon name="part"></sw-icon><svg class="sep" viewBox="0 0 18 34"><path d="M0 0l16 17L0 34"/></svg><sw-icon name="cube"></sw-icon><div class="cur"><sw-icon name="boss"></sw-icon><span>Boss-Extrude1</span></div></div>
<div class="sub"><svg width="19" height="20" fill="#e9e9e9" stroke="#777"><path d="M1 1h5v8h4V4l8 7-8 8v-5H1z"/></svg><div class="chip"><sw-icon name="sketchplain"></sw-icon><span>Sketch1</span></div></div>`);

/* The square plate with finger joints and its driving dimensions. */
define('sw-plate', `<style>:host{display:block;width:640px;height:710px}svg{display:block;overflow:visible}
text{font:700 27px/27px Lato,sans-serif;fill:#111}.thin{font-weight:400;font-size:25px;fill:#00f}.dim{stroke:#333;stroke-width:1;fill:none;shape-rendering:crispEdges}.halo{fill:none;stroke:#9cc6ee;stroke-width:3}.body{fill:#0060bf;stroke:#c98444;stroke-width:1.5}</style>
<svg width="640" height="710"><path class="halo"/><path class="body"/>
<path class="dim" d="M113.500 38v136M632.500 38v136M113 42.500h519M12 177.500h98M12 695.500h98M16.500 177v518"/>
<path d="M113 42.500l13-3v6zM632 42.500l-13-3v6zM16.500 178l-3 13h6zM16.500 695l-3-13h6z"/>
<text x="316" y="37" text-anchor="middle">10.25</text><text transform="translate(10 273) rotate(-90)" text-anchor="middle">10.25</text>
<text class="thin" x="579" y="172" text-anchor="middle">0.25</text><path d="M576 177.500h30" stroke="#00f" stroke-width="1"/></svg>`,
(el, root) => {
  const x0 = 113.5, y0 = 177, u = 518.5 / 41, n = 41, p = [];
  const side = (ax, ay, dx, dy, nx, ny) => {
    p.push([ax, ay]);
    for (let k = 2; k < n - 1; k += 2) {
      [[k, 0], [k, 1], [k + 1, 1], [k + 1, 0]].forEach(([t, d]) => p.push([ax + dx * t * u + nx * d * u, ay + dy * t * u + ny * d * u]));
    }
  };
  side(x0, y0, 1, 0, 0, 1); side(x0 + 518.5, y0, 0, 1, -1, 0);
  side(x0 + 518.5, y0 + 518.5, -1, 0, 0, -1); side(x0, y0 + 518.5, 0, -1, 1, 0);
  const d = 'M' + p.map(q => Math.round(q[0]) + ' ' + Math.round(q[1])).join('L') + 'z';
  root.querySelectorAll('.halo,.body').forEach(e => e.setAttribute('d', d));
});

define('sw-triad', `<style>:host{display:block;width:130px;height:100px}svg{overflow:visible}text{font:700 20px/20px Lato,sans-serif;fill:#111}</style>
<svg width="130" height="100"><path d="M54 22h27" stroke="#b81414" stroke-width="6"/><path d="M54 22h27" stroke="#f08c8c" stroke-width="2"/><path fill="#c01717" d="M80 15l14 7-14 7z"/>
<path d="M48 28v28" stroke="#1414b4" stroke-width="6"/><path d="M48 28v28" stroke="#8c8cf0" stroke-width="2"/><path fill="#1717c0" d="M41 54h14l-7 14z"/><circle cx="48" cy="22" r="7" fill="#174a17"/><path d="M44 15l4 5 4-5M48 20v6" fill="none" stroke="#0a8a0a"/>
<path d="M93 14l10 13M103 14L93 27" stroke="#e22"/><path d="M45 68h6l-6 12h6" fill="none" stroke="#22e"/>
<text x="0" y="95">*Top</text></svg>`);

define('sw-taskpane', `<style>:host{display:block;width:40px;box-sizing:border-box;border:1px solid #808080;border-right:0}${BUTTON}
button{display:flex;align-items:center;justify-content:center;width:100%;height:36px;background:#d3d3d3;border-bottom:1px solid #808080}button:first-of-type{background:#f7f7f7}button:last-child{border:0;height:35px}</style>
${['home', 'books', 'folder', 'palette', 'ball', 'props', 'chat'].map(i => `<button aria-label="${i}"><sw-icon name="${i}"></sw-icon></button>`).join('')}`);

define('sw-viewport', `<style>:host{display:flex;flex:1;min-width:0;position:relative;overflow:hidden;background:#f0f0f0}
.scene{position:relative;flex:1;border-right:1px solid #d8d8d8;margin-right:7px;background:radial-gradient(ellipse 66% 58% at 8% 0,#fff 45%,#fff0),linear-gradient(90deg,#fff0 80%,#fff8),linear-gradient(#e6e8f0 0,#dfe2eb 20%,#dadde8 42%,#e2e4ec 52%,#f3f4f8 62%,#fff 72%,#fff 86%,#f6f7fa)}
.tools{position:absolute;left:592px;right:11px;top:7px;display:flex;align-items:center;gap:10px}
.sp{flex:1}.abs{position:absolute}
.tip{left:911px;top:323px;box-sizing:border-box;height:30px;padding:0 5px;background:#fff;border:1px solid #767676;box-shadow:4px 4px 3px #0006;color:#575757;line-height:29px}</style>
<div class="scene"><sw-plate class="abs" style="left:calc(50% - 294px);top:50px"></sw-plate><sw-breadcrumb class="abs" style="left:15px;top:50px"></sw-breadcrumb><sw-triad class="abs" style="left:13px;bottom:0;height:100px"></sw-triad>
<div class="tools"><sw-tool dim icon="zoomfit"></sw-tool><sw-tool dim icon="zoomarea"></sw-tool><sw-tool dim icon="prev"></sw-tool><sw-tool dim icon="section"></sw-tool><sw-tool dim icon="orient" drop></sw-tool><sw-tool dim icon="display" drop></sw-tool><sw-tool dim icon="eye" drop></sw-tool><sw-tool dim icon="appearance"></sw-tool><sw-tool dim icon="scene" drop></sw-tool><sw-tool dim icon="monitor" drop></sw-tool><span class="sp"></span><sw-tool dim icon="dockl"></sw-tool><sw-tool dim icon="dockr"></sw-tool><sw-tool dim icon="min"></sw-tool><sw-tool dim icon="restore"></sw-tool><sw-tool dim icon="close"></sw-tool></div>
<div class="abs tip">Boss-Extrude1</div></div><sw-taskpane class="abs" style="right:0;top:59px"></sw-taskpane>`);

define('sw-doc-tabs', `<style>:host{display:flex;flex:none;box-sizing:border-box;height:26px;border:1px solid #808080;border-width:1px 0;background:#f7f7f7;font-size:18px}${BUTTON}
.nav{display:flex;width:98px;box-sizing:border-box;background:#a4a6bd;border-left:2px solid #8aa;border-right:1px solid #777}.nav button{flex:1;display:flex;border:1px solid #8285a0;align-items:center;justify-content:center}
svg{width:12px;height:14px;fill:#777a96;stroke:#777a96}.t{height:24px;line-height:22px;color:#222;white-space:nowrap}.on{font-weight:700;color:#000;width:88px}.off{background:#d3d3d3;border-left:1px solid #808080;border-right:1px solid #808080;width:172px;text-align:left;padding-left:16px}</style>
<div class="nav"><button aria-label="First"><svg><path d="M1 1v12M11 1L4 7l7 6z"/></svg></button><button aria-label="Previous"><svg><path d="M9 1L3 7l6 6z"/></svg></button><button aria-label="Next"><svg><path d="M3 1l6 6-6 6z"/></svg></button><button aria-label="Last"><svg><path d="M1 1l7 6-7 6zM11 1v12"/></svg></button></div>
<button class="t on">Model</button><button class="t off">Motion Study 1</button>`);

define('sw-status', `<style>:host{display:flex;flex:none;align-items:center;box-sizing:border-box;height:26px;padding:3px 5px 0 1px;background:#f7f7f7;white-space:nowrap;color:#111;overflow:hidden}
.msg{flex:1}.part{padding:0 5px;border:1px solid #ccc;border-width:0 1px}.gap{border-left:1px solid #ccc;width:7px;height:23px}
.unit{display:flex;align-items:center;gap:40px;margin-left:16px;padding-left:54px;border-left:1px solid #ccc;height:23px}.unit i{border:4px solid transparent;border-bottom:4px solid #333;border-top:0}sw-icon{margin-left:66px}</style>
<span class="msg">SOLIDWORKS Student Edition - Academic Use Only</span><span class="gap"></span><span class="part">Editing Part</span><span class="unit">IPS<i></i></span><sw-icon name="tag"></sw-icon>`);

define('sw-window', el => `<style>:host{display:block;width:155px;height:46px;flex:none}${BUTTON}button{display:flex;align-items:center;gap:3px;width:100%;height:46px;box-sizing:border-box;padding:0 1px;border-bottom:3px solid #76d7f5;color:#fff;white-space:nowrap}
:host([active]){width:167px}:host([active]) button{background:#3d3d3d;padding-left:7px}span{padding-top:2px}</style>
<button><sw-icon name="${el.getAttribute('icon')}"></sw-icon><span><slot></slot></span></button>`);

define('sw-taskbar', `<style>:host{display:flex;flex:none;height:46px;background:#050606;color:#fff;align-items:center;box-sizing:border-box}${BUTTON}
.sys{display:flex;gap:26px;margin:0 29px 0 13px}.pins{display:flex;gap:25px;margin-right:19px}.wins{display:flex;gap:13px}.wins sw-window[active]{margin:0 -5px 0 -5px}
.tray{display:flex;align-items:center;justify-content:flex-end;flex:1;gap:22px;--size:26px;padding-right:6px;white-space:nowrap}
.tray button{display:block}.end{width:1px;height:46px;background:#555;margin-left:8px}.clock{margin:0 12px 0 4px}</style>
<div class="sys">${['win', 'taskview'].map(i => `<button aria-label="${i}"><sw-icon name="${i}"></sw-icon></button>`).join('')}</div>
<div class="pins">${['github', 'cards', 'labview', 'arduino', 'berry', 'explorer', 'chrome'].map(i => `<button aria-label="${i}"><sw-icon name="${i}"></sw-icon></button>`).join('')}</div>
<div class="wins"><sw-window icon="chrome">LoTRO Them...</sw-window><sw-window icon="photo">Front.png - P...</sw-window><sw-window icon="photo">Sides.png - P...</sw-window><sw-window icon="photo">back.png - P...</sw-window><sw-window icon="sw" active>SOLIDWORK...</sw-window><sw-window icon="paint">Untitled - Paint</sw-window></div>
<div class="tray"><sw-icon name="up"></sw-icon><sw-icon name="wifi"></sw-icon><sw-icon name="sound"></sw-icon><sw-icon name="battery"></sw-icon><span>ENG</span><span class="clock">5:56 PM</span><button aria-label="Action center"><sw-icon name="action"></sw-icon></button><span class="end"></span></div>`);

define('sw-app', `<style>:host{display:flex;flex-direction:column;height:100vh}main{flex:1;display:flex;min-height:0}</style>
<sw-titlebar></sw-titlebar><sw-ribbon></sw-ribbon><main><sw-panel></sw-panel><sw-viewport></sw-viewport></main><sw-doc-tabs></sw-doc-tabs><sw-status></sw-status><sw-taskbar></sw-taskbar>`);
</script>
</body>
</html>
